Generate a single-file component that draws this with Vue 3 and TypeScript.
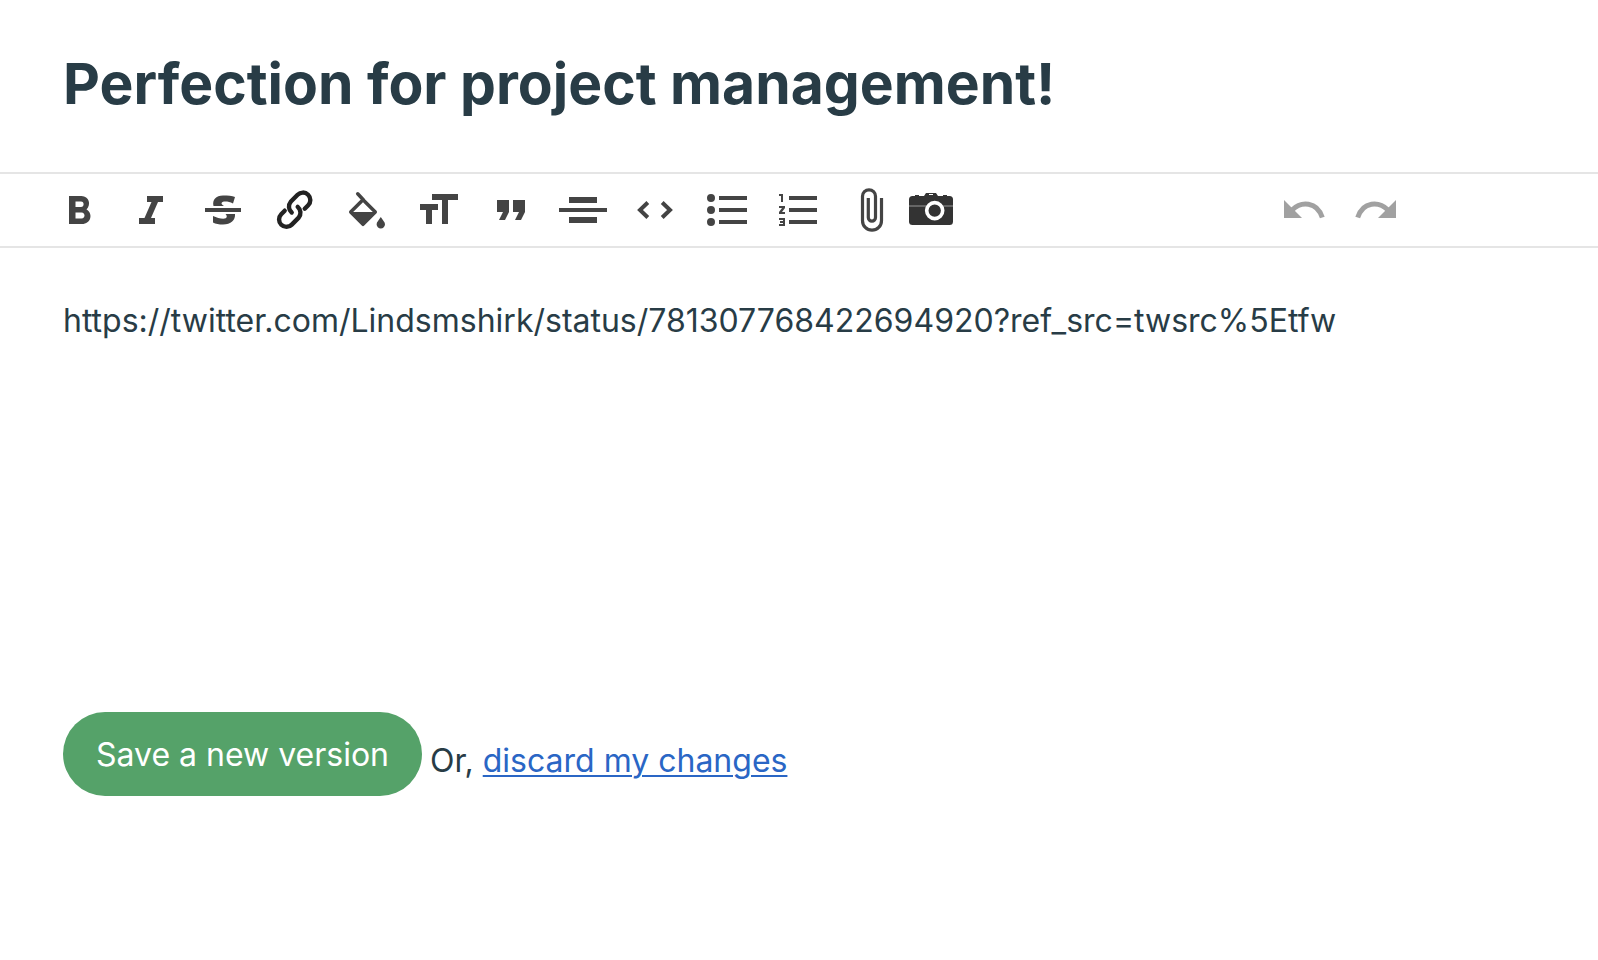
<script setup lang="ts">
import { ref } from 'vue'

interface Tool {
  name: string
  solid?: string
  line?: string
  weight?: number
}

const title = ref('Perfection for project management!')
const body = ref('https://twitter.com/Lindsmshirk/status/781307768422694920?ref_src=twsrc%5Etfw')

const tools: Tool[] = [
  {
    name: 'Bold',
    solid:
      'M26 22H38.500C46 22 48.500 30.500 43.500 35.500C50.500 39.500 48 50 39 50H26ZM32.500 27.500V33H38C41.500 33 41.500 27.500 38 27.500ZM32.500 38.500V44.500H38.500C42.500 44.500 42.500 38.500 38.500 38.500Z',
  },
  { name: 'Italic', solid: 'M32 22H48V28H43L36 44H40V50H24V44H29.500L36.500 28H32Z' },
  {
    name: 'Strikethrough',
    solid:
      'M18 34H54V38H18ZM48 23L46 29.500C42 27.500 38 27 35.500 28C33.500 29 35 31 37 32H26.500C25 26 29 21.500 36 21.500C41 21.500 45 21.500 48 23ZM26 42C30 44 35 45 38 44.500C40 44 40.500 42 38.500 40H48C48.500 46 44 50.500 36 50.500C32 50.500 28.500 50 26 48.500Z',
  },
  {
    name: 'Link',
    weight: 4.4,
    line: 'M45.700 34.700L49.200 31.200A7.400 7.400 0 0 0 38.600 20.800L31.700 27.800A7.600 7.600 0 0 0 32.700 38.500M25.700 36.700L22.200 40.200A7.400 7.400 0 0 0 32.800 50.600L39.700 43.600A7.600 7.600 0 0 0 38.700 32.900',
  },
  {
    name: 'Color',
    weight: 3.5,
    line: 'M26.700 19.800L32.500 26M19.700 38L32 25.700L44.300 38L32 50.300Z',
    solid: 'M20 38H44L32 50ZM49.800 43C51.500 46 54 48 54 50.200A4.200 4.200 0 0 1 45.600 50.200C45.600 48 48 46 49.800 43Z',
  },
  { name: 'Heading', solid: 'M29 20H55V26H45V50H39V26H29ZM17 30H35V36H29V50H23V36H17Z' },
  { name: 'Quote', solid: 'M22 26H34V38L30 46H24L28 38H22ZM38 26H50V38L46 46H40L44 38H38Z' },
  { name: 'Center', solid: 'M22 23H50V29H22ZM12 34H60V38H12ZM22 43H50V49H22Z' },
  { name: 'Code', weight: 4, line: 'M28.800 28.500L21 36L28.800 43.500M43.200 28.500L51 36L43.200 43.500' },
  {
    name: 'Bulleted list',
    solid:
      'M28 22H56V26H28ZM28 34H56V38H28ZM28 46H56V50H28ZM16 24a4 4 0 1 0 8 0a4 4 0 1 0-8 0ZM16 36a4 4 0 1 0 8 0a4 4 0 1 0-8 0ZM16 48a4 4 0 1 0 8 0a4 4 0 1 0-8 0Z',
  },
  {
    name: 'Numbered list',
    solid:
      'M26 22H54V26H26ZM26 34H54V38H26ZM26 46H54V50H26ZM16 20H20V28H18V22H16ZM16 32H22V34L19 38H22V40H16V38L19 34H16ZM16 44H22V52H16V50H20V49H17V47H20V46H16Z',
  },
  {
    name: 'Attach file',
    weight: 3.2,
    line: 'M46.500 24V46.700A9.500 9.500 0 0 1 27.500 46.700V22.300A6.500 6.500 0 0 1 40.500 22.300V43.500A3.600 3.600 0 0 1 33.300 43.500V24',
  },
]
</script>

<template>
  <main class="editor">
    <input v-model="title" class="title" type="text" aria-label="Title" />

    <div class="toolbar" role="toolbar" aria-label="Formatting">
      <div class="group">
        <button v-for="tool in tools" :key="tool.name" class="tool" :class="{ dark: tool.name === 'Link' }" type="button" :aria-label="tool.name">
          <svg viewBox="0 0 72 72" aria-hidden="true">
            <path v-if="tool.solid" :d="tool.solid" fill="currentColor" fill-rule="evenodd" />
            <path
              v-if="tool.line"
              :d="tool.line"
              fill="none"
              stroke="currentColor"
              :stroke-width="tool.weight"
              :stroke-linecap="tool.name === 'Link' || tool.name === 'Color' ? 'round' : 'butt'"
              :stroke-linejoin="tool.name === 'Code' ? 'miter' : 'round'"
            />
          </svg>
        </button>
        <button class="tool camera" type="button" aria-label="Add photo">
          <svg viewBox="0 0 48 72" aria-hidden="true">
            <path d="M17 22L19 19H29L31 22ZM8 21H12V23H8ZM36 21H40V23H36Z" fill="currentColor" />
            <rect x="2" y="22" width="44" height="29" rx="3.500" fill="currentColor" />
            <path d="M22 20.500H26" stroke="#fff" stroke-width="1" />
            <path d="M2 32H46" stroke="#999" stroke-width="1" />
            <circle cx="27.700" cy="36.600" r="8" fill="currentColor" stroke="#fff" stroke-width="3.600" />
          </svg>
        </button>
      </div>
      <div class="group history">
        <button class="tool" type="button" aria-label="Undo">
          <svg viewBox="0 0 72 72" aria-hidden="true">
            <path d="M16 26V44H34Z" fill="currentColor" />
            <path d="M24 36C33 27 49 27 54.300 43.500" fill="none" stroke="currentColor" stroke-width="5" />
          </svg>
        </button>
        <button class="tool" type="button" aria-label="Redo">
          <svg viewBox="0 0 72 72" aria-hidden="true">
            <path d="M56 26V44H38Z" fill="currentColor" />
            <path d="M48 36C39 27 23 27 17.700 43.500" fill="none" stroke="currentColor" stroke-width="5" />
          </svg>
        </button>
      </div>
    </div>

    <textarea v-model="body" class="body" aria-label="Message" spellcheck="false"></textarea>

    <div class="actions">
      <button class="save" type="button">Save a new version</button>
      <p class="alternative">Or, <a href="#">discard my changes</a></p>
    </div>
  </main>
</template>

<style>
body {
  background: #fff;
}
</style>

<style scoped>
.editor {
  color: #283c46;
  font-family: Inter, "Liberation Sans", sans-serif;
  font-size: 32px;
  line-height: 48px;
}

button,
input,
textarea {
  box-sizing: border-box;
  margin: 0;
  border: 0;
  outline: 0;
  background: transparent;
  color: inherit;
  font: inherit;
}

.title {
  display: block;
  width: 100%;
  padding: 48px 63px 52px;
  font-size: 57px;
  font-weight: 700;
  line-height: 72px;
}

.toolbar {
  display: flex;
  justify-content: space-between;
  padding: 0 186px 0 43px;
  border-top: 2px solid #e5e5e5;
  border-bottom: 2px solid #e5e5e5;
}

.group {
  display: flex;
}

.tool {
  width: 72px;
  height: 72px;
  padding: 0;
  color: #444;
  cursor: pointer;
}

.tool svg {
  display: block;
  width: 100%;
  height: 100%;
}

.tool.dark {
  color: #222;
}

.camera {
  width: 48px;
  color: #333;
}

.history .tool {
  color: #a1a1a1;
}

.body {
  display: block;
  width: 100%;
  height: 416px;
  padding: 49px 63px;
  resize: none;
}

.actions {
  display: flex;
  align-items: flex-start;
  gap: 8px;
  padding: 48px 63px;
}

.save {
  padding: 19px 33px 17px;
  border-radius: 42px;
  background: #55a269;
  color: #fff;
  cursor: pointer;
}

.alternative {
  margin: 25px 0 0;
}

.alternative a {
  color: #2a66c5;
  text-decoration-thickness: 2px;
  text-underline-offset: 3px;
}
</style>
